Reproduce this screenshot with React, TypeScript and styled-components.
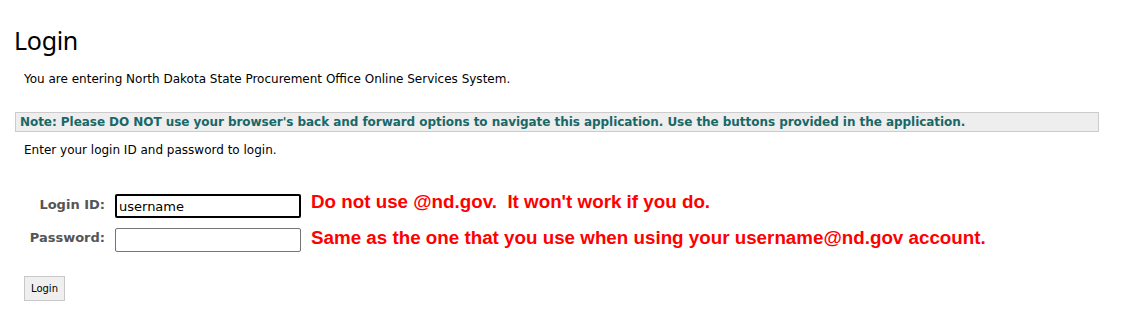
import React from "react";
import styled, { createGlobalStyle } from "styled-components";

const Global = createGlobalStyle`
  html, body { margin: 0; padding: 0; background: #fff; }
  body { font-family: "DejaVu Sans", Verdana, sans-serif; color: #000; }
`;

const Page = styled.div`
  padding: 23px 36px 0 14px;
  width: 1135px;
  box-sizing: border-box;
`;

const Title = styled.h1`
  margin: 0;
  font-family: "Noto Sans", "Open Sans", sans-serif;
  font-weight: 400;
  font-size: 25px;
  line-height: 34px;
  letter-spacing: -0.3px;
`;

const Intro = styled.p`
  margin: 14px 0 0 10px;
  font-size: 12px;
  line-height: 16px;
`;

const Note = styled.div`
  margin: 25px 0 0 1px;
  background: #eeeeee;
  border: 1px solid #cccccc;
  height: 18px;
  box-sizing: content-box;
  padding: 0 0 0 4px;
  font-size: 12px;
  font-weight: bold;
  line-height: 18px;
  letter-spacing: -0.05px;
  color: #186868;
`;

const Hint = styled.p`
  margin: 10px 0 0 10px;
  font-size: 12px;
  line-height: 16px;
`;

const Form = styled.div`
  margin: 36px 0 0 0;
  display: grid;
  grid-template-columns: 91px 186px auto;
  column-gap: 10px;
  row-gap: 10px;
  align-items: center;
`;

const Label = styled.label<{ $lift: number }>`
  text-align: right;
  font-size: 13px;
  font-weight: bold;
  color: #555555;
  margin-top: ${(p) => -2 * p.$lift}px;
`;

const Input = styled.input<{ $focused?: boolean }>`
  box-sizing: border-box;
  width: 186px;
  height: 24px;
  margin: 0;
  padding: 1px 3px;
  font-family: "DejaVu Sans", Verdana, sans-serif;
  font-size: 13px;
  color: #000;
  border-radius: 2px;
  outline: none;
  border: ${(p) => (p.$focused ? "2px solid #000" : "1px solid #767676")};
  padding-left: ${(p) => (p.$focused ? "2px" : "3px")};
`;

const Warn = styled.span<{ $lift: number }>`
  font-family: "Liberation Sans", Arial, sans-serif;
  font-weight: bold;
  font-size: 18.8px;
  line-height: 22px;
  color: #ff0000;
  white-space: pre;
  margin-top: ${(p) => -2 * p.$lift}px;
`;

const Button = styled.button`
  display: block;
  margin: 24px 0 0 10px;
  width: 41px;
  height: 25px;
  padding: 0;
  font-family: "DejaVu Sans", Verdana, sans-serif;
  font-size: 10px;
  color: #000;
  background: #efefef;
  border: 1px solid #c8c8c8;
  border-radius: 0;
`;

export default function App() {
  return (
    <>
      <Global />
      <Page>
        <Title>Login</Title>
        <Intro>You are entering North Dakota State Procurement Office Online Services System.</Intro>
        <Note>
          Note: Please DO NOT use your browser's back and forward options to navigate this application. Use the buttons provided in the application.
        </Note>
        <Hint>Enter your login ID and password to login.</Hint>
        <Form>
          <Label $lift={2}>Login ID:</Label>
          <Input $focused defaultValue="username" />
          <Warn $lift={4}>Do not use @nd.gov.  It won't work if you do.</Warn>
          <Label $lift={3}>Password:</Label>
          <Input type="password" />
          <Warn $lift={2}>Same as the one that you use when using your username@nd.gov account.</Warn>
        </Form>
        <Button>Login</Button>
      </Page>
    </>
  );
}
